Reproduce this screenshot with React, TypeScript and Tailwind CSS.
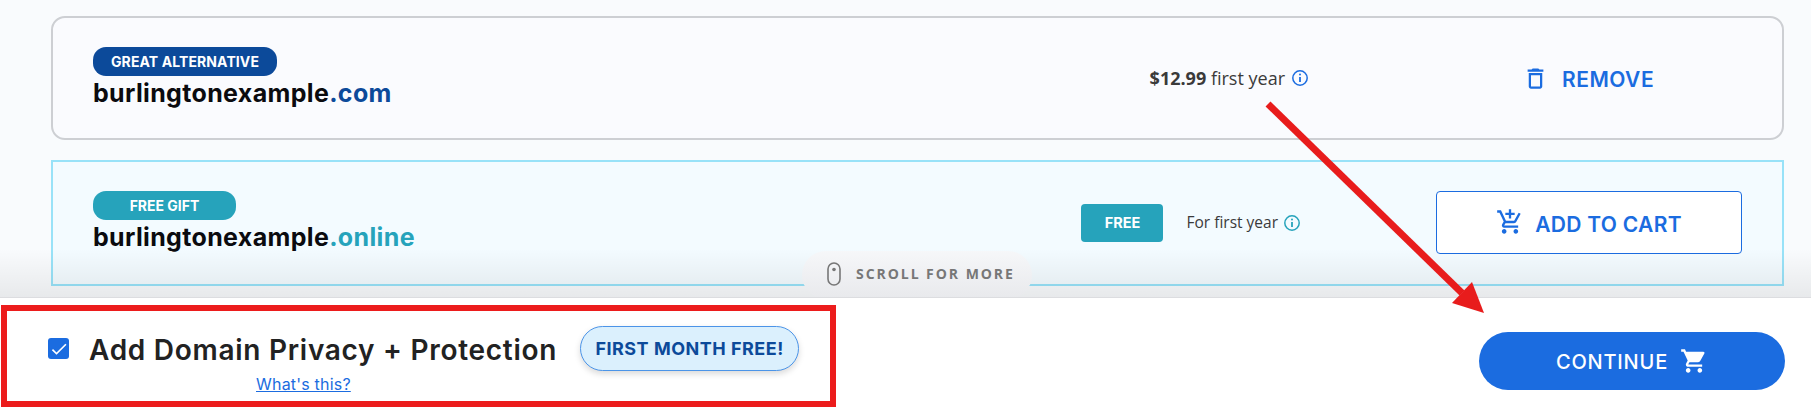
import { MdDeleteOutline, MdOutlineAddShoppingCart, MdShoppingCart, MdCheck } from "react-icons/md";

const head = { fontFamily: "Inter, 'Liberation Sans', sans-serif" };
const body = { fontFamily: "'Open Sans', 'Liberation Sans', sans-serif" };

function InfoIcon({ color }: { color: string }) {
  return (
    <svg width="18" height="18" viewBox="0 0 18 18" fill="none" stroke={color} strokeWidth="1.5">
      <circle cx="9" cy="9" r="7.2" />
      <path d="M9 8v5" strokeWidth="1.8" />
      <circle cx="9" cy="5.5" r="1" fill={color} stroke="none" />
    </svg>
  );
}

function MouseIcon() {
  return (
    <svg width="14" height="24" viewBox="0 0 14 24" fill="none" stroke="#777" strokeWidth="1.6">
      <rect x="1" y="1" width="12" height="22" rx="6" />
      <circle cx="7" cy="7.5" r="1.8" fill="#777" stroke="none" />
    </svg>
  );
}

export default function App() {
  return (
    <div className="relative w-[1811px] h-[418px] overflow-hidden bg-white" style={head}>
      <div className="relative h-[298px] overflow-hidden bg-[#f9fbfd] border-b border-[#dcdde0] pt-[16px] pl-[51px] pr-[27px] flex flex-col gap-[20px]">
        <div className="h-[124px] shrink-0 flex items-center rounded-[14px] border-2 border-[#cdcfd3] bg-[#fafbfe] pl-[40px]">
          <div className="flex-1 flex flex-col items-start">
            <span className="h-[29px] w-[184px] rounded-[13px] bg-[#0c4a9a] text-white text-[14px] font-bold flex items-center justify-center tracking-[0.1px]">
              GREAT ALTERNATIVE
            </span>
            <span className="h-[34px] leading-[34px] text-[25px] font-bold text-[#0b0b0f] tracking-[0.35px]">
              burlingtonexample<span className="text-[#0c4a9a]">.com</span>
            </span>
          </div>
          <div className="flex items-center gap-[6px] mr-[125px] text-[18px] text-[#3a3a3a]" style={body}>
            <span><b className="font-bold">$12.99</b> first year</span>
            <InfoIcon color="#1b6ce0" />
          </div>
          <div className="w-[348px] flex items-center text-[#1b6ce0] text-[21px] font-semibold tracking-[0.5px]">
            <span className="ml-[88px] flex items-center gap-[13px]">
              <MdDeleteOutline size={27} />
              <span className="pt-[3px]">REMOVE</span>
            </span>
          </div>
        </div>

        <div className="h-[126px] shrink-0 flex items-center border-2 border-[#98e2f8] bg-[#f3fbff] pl-[40px] pr-[40px]">
          <div className="flex-1 flex flex-col items-start mb-[2px]">
            <span className="h-[29px] w-[143px] rounded-[13px] bg-[#26a3bb] text-white text-[14px] font-bold flex items-center justify-center">
              FREE GIFT
            </span>
            <span className="h-[34px] leading-[34px] text-[25px] font-bold text-[#0b0b0f] tracking-[0.35px]">
              burlingtonexample<span className="text-[#26a3bb]">.online</span>
            </span>
          </div>
          <span className="w-[82px] h-[38px] rounded-[4px] bg-[#26a3bb] text-white text-[14.5px] font-bold flex items-center justify-center">
            FREE
          </span>
          <span className="ml-[23px] text-[15.5px] text-[#3a3a3a]" style={body}>For first year</span>
          <span className="ml-[5px] mr-[135px] flex"><InfoIcon color="#26a3bb" /></span>
          <button className="w-[306px] h-[63px] mb-[2px] rounded-[4px] border border-[#1b6ce0] bg-white text-[#1b6ce0] text-[21px] font-semibold tracking-[0.3px] flex items-center justify-center gap-[11px]">
            <MdOutlineAddShoppingCart size={28} />
            <span className="pt-[5px]">ADD TO CART</span>
          </button>
        </div>

        <div className="absolute left-0 right-0 bottom-0 h-[48px] bg-gradient-to-b from-transparent to-[#00000012] pointer-events-none" />
        <div className="absolute left-[802px] top-[251px] w-[230px] h-[48px] rounded-full bg-gradient-to-b from-[#f6f7f9] to-[#e8e9ec] flex items-start gap-[15px] pl-[25px] pt-[11px]">
          <MouseIcon />
          <span className="text-[14px] font-bold text-[#777] tracking-[1.95px] mt-[2px] leading-[20px]" style={body}>
            SCROLL FOR MORE
          </span>
        </div>
      </div>

      <div className="flex items-start justify-between pr-[26px]">
        <div className="mt-[7px] ml-[1px] w-[835px] h-[102px] border-[6px] border-[#ec1c1c] flex items-start pl-[41px] pt-[15px]">
          <div className="flex flex-col">
            <div className="flex items-center h-[45px]">
              <span className="w-[21px] h-[21px] rounded-[3px] bg-[#1b6ce0] text-white flex items-center justify-center">
                <MdCheck size={20} />
              </span>
              <span className="ml-[20px] pt-[3px] text-[28px] font-semibold text-[#222] tracking-[0.72px]">Add Domain Privacy + Protection</span>
            </div>
            <a className="mt-[3px] ml-[208px] text-[16px] text-[#1b6ce0] underline leading-[20px] tracking-[0.2px]">What's this?</a>
          </div>
          <span className="ml-[23px] w-[219px] h-[45px] rounded-full border border-[#4b94e8] bg-[#dbf0fd] shadow-[0_3px_6px_rgba(0,0,0,0.15)] text-[#0c4a9a] text-[18px] font-bold tracking-[0.5px] flex items-center justify-center">
            FIRST MONTH FREE!
          </span>
        </div>
        <button className="mt-[34px] w-[306px] h-[58px] rounded-full bg-[#1b6ce0] text-white text-[20px] font-medium tracking-[0.8px] flex items-center justify-center gap-[12px]">
          <span className="pt-[2px]">CONTINUE</span>
          <MdShoppingCart size={28} />
        </button>
      </div>

      <svg className="absolute inset-0 pointer-events-none" width="1811" height="418" viewBox="0 0 1811 418">
        <path d="M1268 104L1462 293" stroke="#e81c1c" strokeWidth="7" fill="none" />
        <path d="M1484 313L1472 282L1452 303Z" fill="#e81c1c" />
      </svg>
    </div>
  );
}
